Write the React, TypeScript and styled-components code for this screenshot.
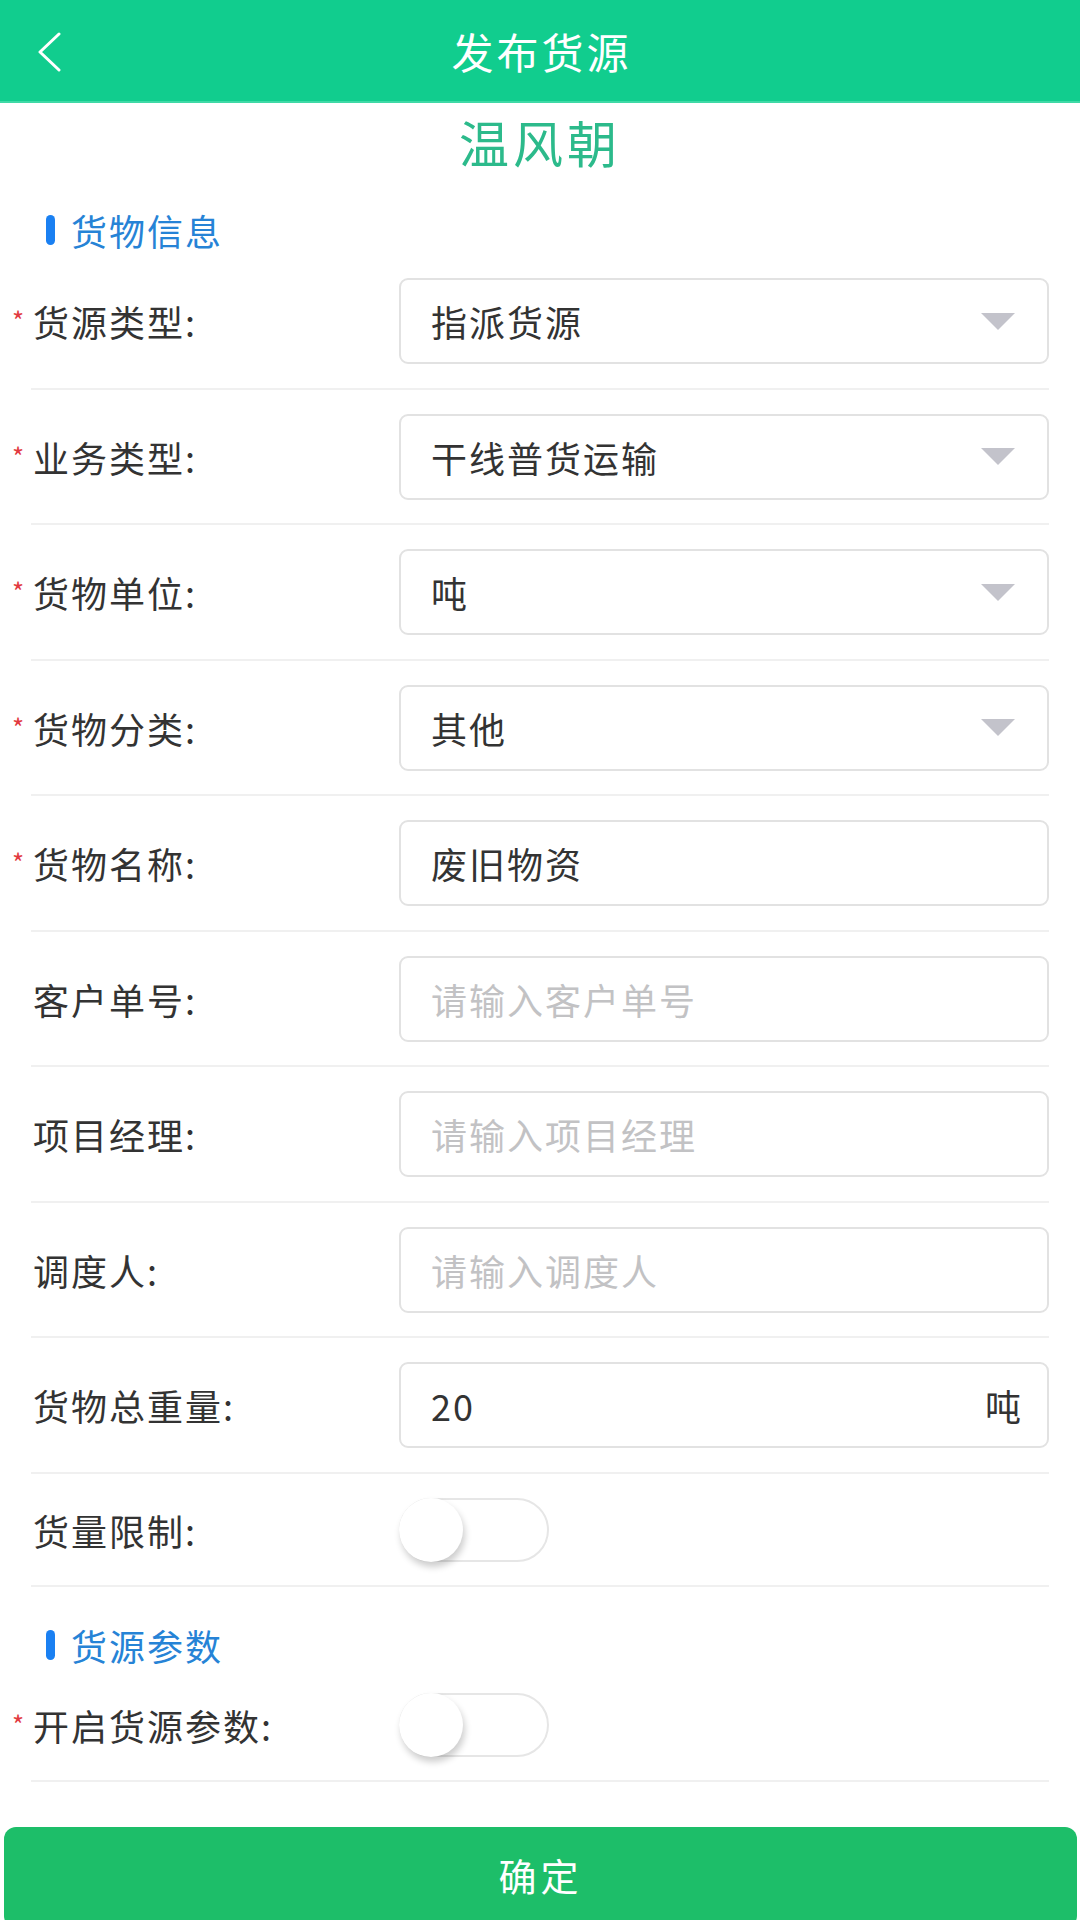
import React from "react";
import styled, { createGlobalStyle } from "styled-components";

const GlobalStyle = createGlobalStyle`
  html, body {
    margin: 0;
    padding: 0;
    background: #ffffff;
    font-family: "Noto Sans CJK SC", "Noto Sans", sans-serif;
  }
  * {
    box-sizing: border-box;
  }
`;

interface IField {
  label: string;
  required?: boolean;
  kind: "select" | "input" | "unit" | "switch";
  value?: string;
  placeholder?: string;
  unit?: string;
}

const cargoFields: IField[] = [
  { label: "货源类型:", required: true, kind: "select", value: "指派货源" },
  { label: "业务类型:", required: true, kind: "select", value: "干线普货运输" },
  { label: "货物单位:", required: true, kind: "select", value: "吨" },
  { label: "货物分类:", required: true, kind: "select", value: "其他" },
  { label: "货物名称:", required: true, kind: "input", value: "废旧物资" },
  { label: "客户单号:", kind: "input", placeholder: "请输入客户单号" },
  { label: "项目经理:", kind: "input", placeholder: "请输入项目经理" },
  { label: "调度人:", kind: "input", placeholder: "请输入调度人" },
  { label: "货物总重量:", kind: "unit", value: "20", unit: "吨" },
  { label: "货量限制:", kind: "switch" },
];

const paramFields: IField[] = [
  { label: "开启货源参数:", required: true, kind: "switch" },
];

function FieldRow({ field }: { field: IField }) {
  const isSwitch = field.kind === "switch";
  return (
    <Row $compact={isSwitch}>
      <Label>
        {field.required && <Star>*</Star>}
        {field.label}
      </Label>
      {isSwitch ? (
        <Toggle>
          <Knob />
        </Toggle>
      ) : (
        <Box>
          <BoxText $placeholder={!field.value}>
            {field.value || field.placeholder}
          </BoxText>
          {field.kind === "select" && <Caret />}
          {field.kind === "unit" && <Unit>{field.unit}</Unit>}
        </Box>
      )}
    </Row>
  );
}

export default function App() {
  return (
    <>
      <GlobalStyle />
      <Page>
        <Header>
          <Back>
            <svg width="26" height="40" viewBox="0 0 26 40" fill="none">
              <path
                d="M23 2 L4 20 L23 38"
                stroke="#ffffff"
                strokeWidth="3"
                strokeLinecap="round"
                strokeLinejoin="round"
              />
            </svg>
          </Back>
          <Title>发布货源</Title>
          <span />
        </Header>

        <Name>温风朝</Name>

        <SectionTitle>货物信息</SectionTitle>
        {cargoFields.map((f) => (
          <FieldRow key={f.label} field={f} />
        ))}

        <SectionTitle>货源参数</SectionTitle>
        {paramFields.map((f) => (
          <FieldRow key={f.label} field={f} />
        ))}
      </Page>
      <Submit>确定</Submit>
    </>
  );
}

const Page = styled.div`
  width: 1080px;
  min-height: 1920px;
  padding-bottom: 120px;
  background: #ffffff;
`;

const Header = styled.header`
  height: 103px;
  background: #11cd8e;
  border-bottom: 2px solid #3fd9a6;
  display: grid;
  grid-template-columns: 1fr auto 1fr;
  align-items: center;
`;

const Back = styled.div`
  padding-left: 36px;
  padding-top: 2px;
  display: flex;
  align-items: center;
`;

const Title = styled.h1`
  margin: 0;
  color: #ffffff;
  font-size: 42px;
  font-weight: 400;
  letter-spacing: 3px;
  padding-left: 3px;
`;

const Name = styled.div`
  padding-top: 8px;
  height: 69px;
  line-height: 60px;
  text-align: center;
  color: #2cba8b;
  font-size: 50px;
  font-weight: 400;
  letter-spacing: 4px;
`;

const SectionTitle = styled.div`
  display: flex;
  align-items: center;
  gap: 16px;
  padding: 38px 0 4px 46px;
  height: 82px;
  color: #2683d6;
  font-size: 36px;
  letter-spacing: 2px;

  &::before {
    content: "";
    width: 9px;
    height: 30px;
    border-radius: 5px;
    background: #1a80f2;
  }
`;

const Row = styled.div<{ $compact?: boolean }>`
  display: flex;
  align-items: center;
  margin: 0 31px;
  padding: ${(p) => (p.$compact ? "24px 0 23px" : "24px 0 23.5px")};
  border-bottom: 2px solid #f0f0f0;
`;

const Label = styled.div`
  width: 368px;
  flex-shrink: 0;
  padding-left: 2px;
  color: #333333;
  font-size: 36px;
  letter-spacing: 2px;
  display: flex;
  align-items: center;
`;

const Star = styled.span`
  width: 21px;
  margin-left: -21px;
  color: #e23a3f;
  font-size: 26px;
  letter-spacing: 0;
  align-self: flex-start;
  padding-top: 6px;
`;

const Box = styled.div`
  flex: 1;
  height: 86px;
  border: 2px solid #e2e2e2;
  border-radius: 9px;
  display: flex;
  align-items: center;
  padding: 0 30px 0 30px;
`;

const BoxText = styled.span<{ $placeholder?: boolean }>`
  flex: 1;
  font-size: 36px;
  letter-spacing: 2px;
  color: ${(p) => (p.$placeholder ? "#c2c2c4" : "#333333")};
`;

const Caret = styled.span`
  width: 0;
  height: 0;
  margin-right: 2px;
  border-left: 17px solid transparent;
  border-right: 17px solid transparent;
  border-top: 17px solid #c3c3cb;
`;

const Unit = styled.span`
  font-size: 36px;
  color: #333333;
  margin-right: -4px;
`;

const Toggle = styled.div`
  position: relative;
  width: 150px;
  height: 64px;
  border: 2px solid #e6e6e6;
  border-radius: 32px;
  background: #ffffff;
`;

const Knob = styled.div`
  position: absolute;
  left: -2px;
  top: -2px;
  width: 64px;
  height: 64px;
  border-radius: 50%;
  background: #ffffff;
  box-shadow: 2px 5px 7px rgba(0, 0, 0, 0.2);
`;

const Submit = styled.button`
  position: fixed;
  left: 4px;
  right: 3px;
  bottom: -8px;
  height: 101px;
  padding-bottom: 8px;
  border: none;
  border-radius: 12px;
  background: #1dbe69;
  color: #ffffff;
  font-family: "Noto Sans CJK SC", "Noto Sans", sans-serif;
  font-size: 38px;
  letter-spacing: 4px;
`;
